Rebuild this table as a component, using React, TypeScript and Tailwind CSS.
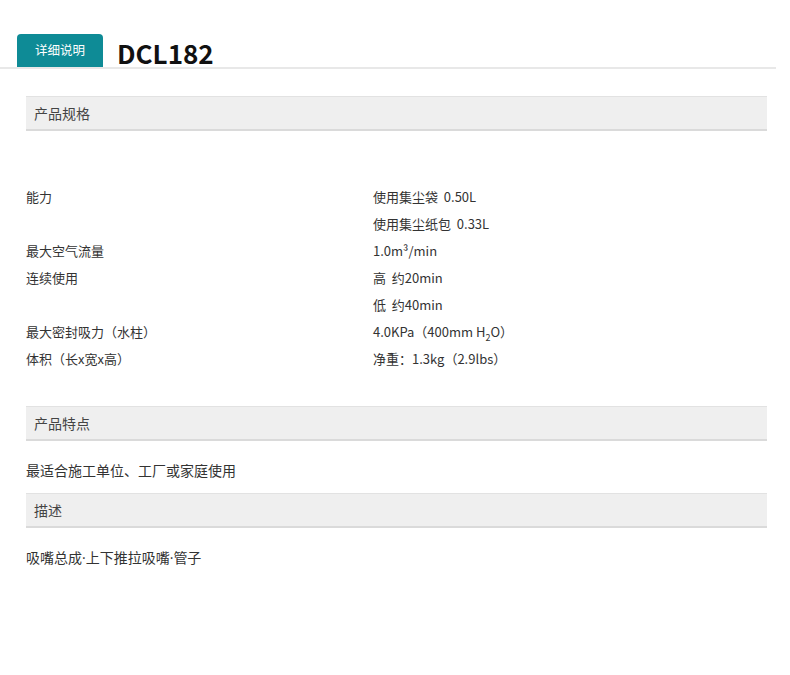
const specs: [string, string][] = [
  ["能力", "使用集尘袋  0.50L"],
  ["", "使用集尘纸包  0.33L"],
  ["最大空气流量", "1.0m³/min"],
  ["连续使用", "高  约20min"],
  ["", "低  约40min"],
  ["最大密封吸力（水柱）", "H2O"],
  ["体积（长x宽x高）", "净重：1.3kg（2.9lbs）"],
];

function SectionHeader({ title }: { title: string }) {
  return (
    <div className="ml-[26px] mr-[23px] h-[35px] bg-[#efefef] border-t border-[#e2e2e2] border-b-2 border-b-[#dadada] flex items-center px-2 text-[14px] text-[#444]">
      {title}
    </div>
  );
}

export default function App() {
  return (
    <div
      className="w-[790px] h-[675px] bg-white text-[#333]"
      style={{ fontFamily: '"Noto Sans CJK SC", "Open Sans", sans-serif' }}
    >
      <div className="pt-[34px] px-[17px] mr-[14px] flex items-end border-b-2 border-[#e8e8e8]">
        <div className="w-[86px] h-[33px] bg-[#0e8b96] rounded-t-[4px] flex items-center justify-center text-white text-[12.5px]">
          详细说明
        </div>
        <h1 className="ml-[14px] mb-[-2px] text-[26px] leading-[33px] font-bold text-[#111]">
          DCL182
        </h1>
      </div>

      <div className="mt-[27px]">
        <SectionHeader title="产品规格" />
      </div>

      <div className="mt-[52px] px-[26px] text-[13px] text-[#333]">
        {specs.map(([label, value], i) => (
          <div key={i} className="flex h-[27px] items-center">
            <div className="w-[347px]">{label}</div>
            <div>
              {value === "H2O" ? (
                <>
                  4.0KPa（400mm H<sub className="text-[9px] align-[-2px]">2</sub>O）
                </>
              ) : (
                <span className="whitespace-pre">{value}</span>
              )}
            </div>
          </div>
        ))}
      </div>

      <div className="mt-[34px]">
        <SectionHeader title="产品特点" />
      </div>
      <div className="px-[26px] h-[52px] pt-[6px] flex items-center text-[14px] text-[#333]">
        最适合施工单位、工厂或家庭使用
      </div>
      <SectionHeader title="描述" />
      <div className="px-[26px] h-[58px] flex items-center text-[14px] text-[#333]">
        <span>
          吸嘴总成<span style={{ fontFamily: '"Open Sans", sans-serif' }}>·</span>上下推拉吸嘴
          <span style={{ fontFamily: '"Open Sans", sans-serif' }}>·</span>管子
        </span>
      </div>
    </div>
  );
}
